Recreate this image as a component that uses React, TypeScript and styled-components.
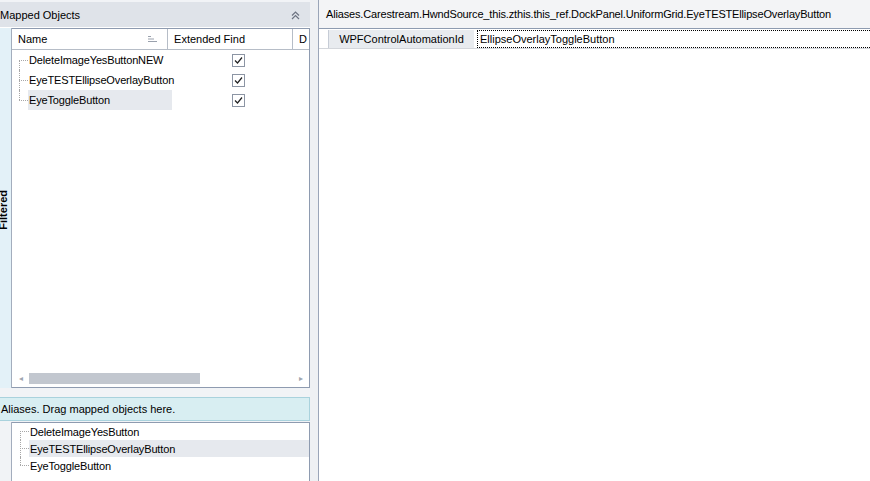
import styled, { createGlobalStyle } from 'styled-components';

const GlobalStyle = createGlobalStyle`
  html, body {
    margin: 0;
    padding: 0;
    background: #ffffff;
  }
  body {
    font-family: "Liberation Sans", Arial, sans-serif;
    font-size: 11px;
    color: #000;
  }
`;

const mapped = [
  { name: 'DeleteImageYesButtonNEW', checked: true },
  { name: 'EyeTESTEllipseOverlayButton', checked: true },
  { name: 'EyeToggleButton', checked: true, selected: true },
];

const aliases = [
  { name: 'DeleteImageYesButton' },
  { name: 'EyeTESTEllipseOverlayButton', selected: true },
  { name: 'EyeToggleButton' },
];

const DoubleChevronUp = () => (
  <svg width="9" height="9" viewBox="0 0 9 9">
    <path d="M1 4.5 L4.5 1 L8 4.5 M1 8 L4.5 4.5 L8 8" fill="none" stroke="#6d7482" strokeWidth="1.2" />
  </svg>
);

const SortIcon = () => (
  <svg width="9" height="8" viewBox="0 0 9 8">
    <path d="M0 1.5 H3 M0 4 H6 M0 6.5 H9" stroke="#9aa1ad" strokeWidth="1" />
  </svg>
);

const Check = () => (
  <svg width="9" height="9" viewBox="0 0 9 9">
    <path d="M1 4.5 L3.5 7 L8 1.5" fill="none" stroke="#222" strokeWidth="1.2" />
  </svg>
);

const App = () => {
  return (
    <Page>
      <GlobalStyle />
      <LeftPane>
        <PaneHeader>
          <span>Mapped Objects</span>
          <HeaderButton>
            <DoubleChevronUp />
          </HeaderButton>
        </PaneHeader>
        <UpperSection>
          <FilterStrip>
            <VerticalLabel>Filtered</VerticalLabel>
          </FilterStrip>
          <GridBox>
            <ColumnHeader>
              <HeaderCell $width={160}>
                <span>Name</span>
                <SortIcon />
              </HeaderCell>
              <HeaderCell $width={128}>Extended Find</HeaderCell>
              <HeaderCell $width={0}>D</HeaderCell>
            </ColumnHeader>
            <Rows>
              {mapped.map((item, i) => (
                <GridRow key={item.name}>
                  <NameCell>
                    <Connector $first={i === 0} $last={i === mapped.length - 1} $height={20} />
                    <NameText $selected={item.selected}>{item.name}</NameText>
                  </NameCell>
                  <CheckCell>
                    <CheckBox>{item.checked && <Check />}</CheckBox>
                  </CheckCell>
                </GridRow>
              ))}
            </Rows>
            <ScrollBar>
              <Arrow>◂</Arrow>
              <Track>
                <Thumb />
              </Track>
              <Arrow>▸</Arrow>
            </ScrollBar>
          </GridBox>
        </UpperSection>
        <Spacer />
        <AliasBar>Aliases. Drag mapped objects here.</AliasBar>
        <LowerSection>
          <PlainStrip />
          <AliasTree>
            {aliases.map((item, i) => (
              <AliasRow key={item.name}>
                <Connector $first={i === 0} $last={i === aliases.length - 1} $height={17} />
                <AliasText $selected={item.selected}>{item.name}</AliasText>
              </AliasRow>
            ))}
          </AliasTree>
        </LowerSection>
      </LeftPane>
      <Splitter />
      <RightPane>
        <PathHeader>Aliases.Carestream.HwndSource_this.zthis.this_ref.DockPanel.UniformGrid.EyeTESTEllipseOverlayButton</PathHeader>
        <PropertyGrid>
          <PropRow>
            <Gutter />
            <PropLabel>WPFControlAutomationId</PropLabel>
            <PropValue>EllipseOverlayToggleButton</PropValue>
          </PropRow>
        </PropertyGrid>
      </RightPane>
    </Page>
  );
};

const Page = styled.div`
  display: flex;
  width: 870px;
  height: 481px;
  overflow: hidden;
  background: #fff;
`;

const LeftPane = styled.div`
  width: 310px;
  display: flex;
  flex-direction: column;
  padding-top: 2px;
  background: #f1f3f6;
  box-sizing: border-box;
`;

const PaneHeader = styled.div`
  height: 25px;
  display: flex;
  align-items: center;
  justify-content: space-between;
  padding: 0 10px 0 0;
  background: #dfe3e9;
  font-size: 11px;
  border-bottom: 1px solid #fff;
`;

const HeaderButton = styled.span`
  display: flex;
  align-items: center;
  padding-top: 2px;
`;

const UpperSection = styled.div`
  display: flex;
  height: 360px;
`;

const FilterStrip = styled.div`
  width: 11px;
  background: #e3f1f8;
  border-right: 1px solid #a3adbd;
  display: flex;
  align-items: center;
  justify-content: center;
  overflow: hidden;
`;

const VerticalLabel = styled.span`
  writing-mode: vertical-rl;
  transform: rotate(180deg);
  font-weight: bold;
  font-size: 11px;
  margin-left: -5px;
  margin-top: 4px;
  white-space: nowrap;
`;

const GridBox = styled.div`
  flex: 1;
  display: flex;
  flex-direction: column;
  background: #fff;
  border: 1px solid #8e9bb0;
  border-left: none;
  overflow: hidden;
`;

const ColumnHeader = styled.div`
  display: flex;
  height: 20px;
  border-bottom: 1px solid #b6bdc7;
  font-size: 11px;
`;

const HeaderCell = styled.div<{ $width: number }>`
  display: flex;
  align-items: center;
  justify-content: space-between;
  box-sizing: border-box;
  ${({ $width }) => ($width ? `width: ${$width}px;` : 'flex: 1;')}
  padding: 0 10px 0 6px;
  border-right: ${({ $width }) => ($width ? '1px solid #b6bdc7' : 'none')};
  white-space: nowrap;
  overflow: hidden;
`;

const Rows = styled.div`
  flex: 1;
`;

const GridRow = styled.div`
  display: flex;
  height: 20px;
`;

const NameCell = styled.div`
  width: 160px;
  display: flex;
  align-items: stretch;
  padding-left: 7px;
  box-sizing: border-box;
`;

const Connector = styled.span<{ $first: boolean; $last: boolean; $height: number }>`
  position: relative;
  width: 9px;
  flex: none;
  &::before {
    content: '';
    position: absolute;
    left: 0;
    top: ${({ $first, $height }) => ($first ? `${Math.floor($height / 2)}px` : '0')};
    bottom: ${({ $last, $height }) => ($last ? `${$height - Math.floor($height / 2)}px` : '0')};
    border-left: 1px dotted #a7a7a7;
  }
  &::after {
    content: '';
    position: absolute;
    left: 0;
    right: 0;
    top: ${({ $height }) => Math.floor($height / 2)}px;
    border-top: 1px dotted #a7a7a7;
  }
`;

const NameText = styled.span<{ $selected?: boolean }>`
  flex: 1;
  display: flex;
  align-items: center;
  padding-left: 1px;
  letter-spacing: -0.15px;
  background: ${({ $selected }) => ($selected ? '#e6e9ee' : 'transparent')};
  white-space: nowrap;
`;

const CheckCell = styled.div`
  width: 128px;
  display: flex;
  align-items: center;
  justify-content: center;
  padding-left: 2px;
`;

const CheckBox = styled.span`
  width: 11px;
  height: 11px;
  border: 1px solid #8c95a4;
  background: #fff;
  display: flex;
  align-items: center;
  justify-content: center;
`;

const ScrollBar = styled.div`
  height: 15px;
  display: flex;
  align-items: center;
  margin-bottom: 1px;
  background: #fff;
`;

const Arrow = styled.span`
  width: 17px;
  text-align: center;
  font-size: 8px;
  color: #a0a6b0;
`;

const Track = styled.div`
  flex: 1;
  height: 11px;
`;

const Thumb = styled.div`
  width: 171px;
  height: 100%;
  background: #c2c7cf;
`;

const Spacer = styled.div`
  height: 9px;
`;

const AliasBar = styled.div`
  height: 22px;
  display: flex;
  align-items: center;
  padding-left: 1px;
  background: #d8eef2;
  border: 1px solid #a9d2dd;
  border-left: none;
  font-size: 11px;
`;

const LowerSection = styled.div`
  flex: 1;
  display: flex;
  margin-top: 1px;
`;

const PlainStrip = styled.div`
  width: 11px;
  border-right: 1px solid #a3adbd;
`;

const AliasTree = styled.div`
  flex: 1;
  background: #fff;
  border: 1px solid #8e9bb0;
  border-left: none;
  border-bottom: none;
  padding: 0 0 0 8px;
`;

const AliasRow = styled.div`
  display: flex;
  height: 17px;
`;

const AliasText = styled.span<{ $selected?: boolean }>`
  flex: 1;
  display: flex;
  align-items: center;
  padding-left: 1px;
  letter-spacing: -0.15px;
  background: ${({ $selected }) => ($selected ? '#e6e9ee' : 'transparent')};
  white-space: nowrap;
`;

const Splitter = styled.div`
  width: 8px;
  background: #eef0f3;
  border-right: 1px solid #9aa5b8;
`;

const RightPane = styled.div`
  flex: 1;
  display: flex;
  flex-direction: column;
  background: #fff;
  min-width: 0;
`;

const PathHeader = styled.div`
  height: 28px;
  display: flex;
  align-items: center;
  padding-left: 7px;
  background: #f3f4f6;
  border-bottom: 1px solid #8e9bb0;
  font-size: 11px;
  letter-spacing: -0.16px;
  white-space: nowrap;
`;

const PropertyGrid = styled.div`
  flex: 1;
  padding-top: 1px;
`;

const PropRow = styled.div`
  display: flex;
  height: 18px;
  border-bottom: 1px solid #d3d6db;
`;

const Gutter = styled.div`
  width: 9px;
  border-right: 1px solid #c6ccd6;
`;

const PropLabel = styled.div`
  width: 145px;
  display: flex;
  align-items: center;
  justify-content: center;
  background: #e8ebef;
  font-size: 11px;
  margin-right: 3px;
`;

const PropValue = styled.div`
  flex: 1;
  display: flex;
  align-items: center;
  padding-left: 2px;
  border: 1px dotted #000;
  border-right: none;
  font-size: 11px;
  white-space: nowrap;
`;

export default App;
